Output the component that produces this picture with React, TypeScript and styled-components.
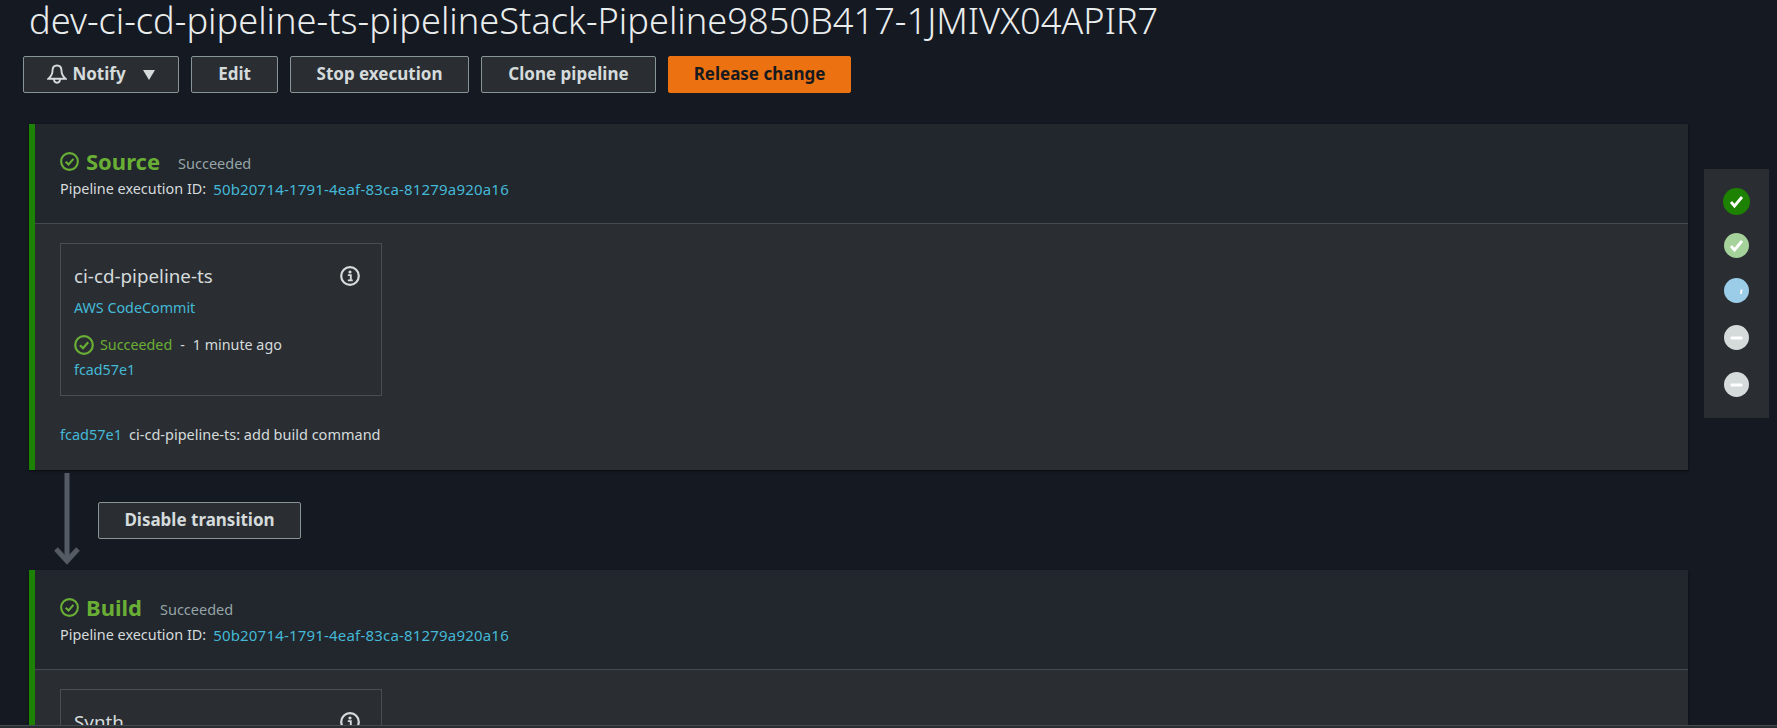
import * as React from 'react';
import styled, { createGlobalStyle } from 'styled-components';

const GlobalStyle = createGlobalStyle`
  html, body {
    margin: 0;
    padding: 0;
    height: 728px;
    overflow: hidden;
    background: #151922;
    font-family: "Noto Sans", "Open Sans", sans-serif;
  }
`;

const Page = styled.div`
  position: relative;
  height: 728px;
  overflow: hidden;
  padding: 0 89px 0 29px;
  box-sizing: border-box;
`;

const Title = styled.h1`
  margin: 0;
  height: 40px;
  font-size: 36.2px;
  line-height: 40px;
  font-weight: 300;
  color: #eaeded;
  white-space: nowrap;
`;

const Toolbar = styled.div`
  display: flex;
  gap: 12px;
  margin: 16px 0 31px -6px;
`;

const Button = styled.button<{ $primary?: boolean; $width: number }>`
  width: ${(p) => p.$width}px;
  height: 37px;
  padding: 0 0 2px;
  box-sizing: border-box;
  display: flex;
  align-items: center;
  justify-content: center;
  gap: 5px;
  border-radius: 2px;
  border: 1px solid ${(p) => (p.$primary ? '#ec7211' : '#879596')};
  background: ${(p) => (p.$primary ? '#ec7211' : '#2a2e33')};
  color: ${(p) => (p.$primary ? '#16191f' : '#d5dbdb')};
  font-family: inherit;
  font-size: 17px;
  font-weight: 700;
`;

const Caret = styled.span`
  width: 0;
  height: 0;
  margin: 2px 0 0 12px;
  border-left: 6.5px solid transparent;
  border-right: 6.5px solid transparent;
  border-top: 10px solid #d5dbdb;
`;

const Stage = styled.section`
  border-left: 6px solid #1d8102;
  background: #2a2e33;
  box-shadow: 0 1px 2px rgba(0, 0, 0, 0.6);
`;

const StageHeader = styled.header`
  height: 100px;
  box-sizing: border-box;
  padding: 22px 25px 0;
  background: #22262d;
  border-bottom: 1px solid #454a50;
`;

const StageTitleRow = styled.div`
  display: flex;
  align-items: center;
  height: 30px;
`;

const StageName = styled.span`
  margin-left: 7px;
  color: #6aaf35;
  font-size: 22px;
  font-weight: 700;
`;

const StageStatus = styled.span`
  margin-left: 18px;
  padding-top: 3px;
  color: #95a5a6;
  font-size: 14.5px;
`;

const ExecutionRow = styled.div`
  margin-top: 3px;
  display: flex;
  gap: 7px;
  color: #d5dbdb;
  font-size: 14.4px;
  line-height: 20px;
`;

const Link = styled.a`
  color: #44b9d6;
`;

const ExecutionLink = styled(Link)`
  font-size: 15px;
  letter-spacing: 0.19px;
`;

const StageBody = styled.div`
  box-sizing: border-box;
  height: 246px;
  padding: 19px 25px 0;
`;

const ActionCard = styled.div`
  width: 322px;
  height: 153px;
  box-sizing: border-box;
  padding: 20px 13px;
  border: 1px solid #4a4e54;
`;

const ActionHead = styled.div`
  display: flex;
  align-items: center;
  justify-content: space-between;
  padding-right: 8px;
  color: #d5dbdb;
  font-size: 18.8px;
  line-height: 24px;
`;

const ActionLine = styled.div<{ $top: number }>`
  display: flex;
  align-items: center;
  gap: 6px;
  margin-top: ${(p) => p.$top}px;
  color: #d5dbdb;
  font-size: 14.3px;
  line-height: 20px;
`;

const Ok = styled.span`
  color: #6aaf35;
`;

const Dash = styled.span`
  margin: 0 2px;
`;

const Revision = styled.div`
  display: flex;
  gap: 7px;
  margin-top: 28px;
  color: #d5dbdb;
  font-size: 14.5px;
  line-height: 20px;
`;

const Transition = styled.div`
  position: relative;
  height: 100px;
  box-sizing: border-box;
  padding: 32px 0 0 69px;
`;

const Arrow = styled.svg`
  position: absolute;
  left: 25px;
  top: 3px;
`;

const BottomEdge = styled.div`
  position: absolute;
  left: 0;
  right: 0;
  bottom: 0;
  height: 2px;
  background: #2a2e33;
  border-top: 1px solid #454a50;
`;

const SideRail = styled.aside`
  position: absolute;
  left: 1704px;
  top: 169px;
  width: 65px;
  height: 249px;
  background: #2a2e33;
  display: flex;
  flex-direction: column;
  align-items: center;
  padding-top: 19px;
  box-sizing: border-box;
`;

const Dot = styled.span<{ $color: string; $size: number; $top: number }>`
  width: ${(p) => p.$size}px;
  height: ${(p) => p.$size}px;
  margin-top: ${(p) => p.$top}px;
  border-radius: 50%;
  background: ${(p) => p.$color};
  display: flex;
  align-items: center;
  justify-content: center;
`;

const CheckCircle = ({ size }: { size: number }) => (
  <svg width={size} height={size} viewBox="0 0 20 20" fill="none" stroke="#6aaf35" strokeWidth="2.2">
    <circle cx="10" cy="10" r="8.8" />
    <path d="M6 10.2l3 3 5.2-6" />
  </svg>
);

const InfoIcon = () => (
  <svg width="20" height="20" viewBox="0 0 20 20" fill="none">
    <circle cx="10" cy="10" r="8.8" stroke="#d5dbdb" strokeWidth="2.2" />
    <circle cx="10" cy="6" r="1.6" fill="#d5dbdb" />
    <path d="M7.8 9.1h3v5M7.8 14.4h5" stroke="#d5dbdb" strokeWidth="1.9" />
  </svg>
);

const BellIcon = () => (
  <svg width="20" height="20" viewBox="0 0 20 20" fill="none" stroke="#d5dbdb" strokeWidth="1.9">
    <path d="M10 1.500c-3 0-4.500 2.300-4.500 5.300 0 3.500-1.200 5.500-4 8h17c-2.800-2.500-4-4.500-4-8 0-3-1.500-5.300-4.500-5.300z" />
    <path d="M7 15c0 2.500 1.200 3.700 3 3.700s3-1.200 3-3.700" />
  </svg>
);

const DotCheck = () => (
  <svg width="15" height="15" viewBox="0 0 15 15" fill="none" stroke="#fff" strokeWidth="2.800">
    <path d="M2 8l3.500 4L13 3" />
  </svg>
);

const DotDash = () => (
  <svg width="13" height="4" viewBox="0 0 13 4">
    <rect width="12" height="3" x="0.500" y="0.500" rx="1" fill="#fff" />
  </svg>
);

const DotTick = () => (
  <svg width="25" height="25" viewBox="0 0 25 25" fill="none" stroke="#fff" strokeWidth="1.800">
    <path d="M17.600 11.500l-.6 4.500" />
  </svg>
);

const StageHeading = ({ name }: { name: string }) => (
  <StageHeader>
    <StageTitleRow>
      <CheckCircle size={19} />
      <StageName>{name}</StageName>
      <StageStatus>Succeeded</StageStatus>
    </StageTitleRow>
    <ExecutionRow>
      Pipeline execution ID:
      <ExecutionLink>50b20714-1791-4eaf-83ca-81279a920a16</ExecutionLink>
    </ExecutionRow>
  </StageHeader>
);

const App = () => (
  <Page>
    <GlobalStyle />
    <Title>dev-ci-cd-pipeline-ts-pipelineStack-Pipeline9850B417-1JMIVX04APIR7</Title>
    <Toolbar>
      <Button $width={156}>
        <BellIcon />
        Notify
        <Caret />
      </Button>
      <Button $width={87}>Edit</Button>
      <Button $width={179}>Stop execution</Button>
      <Button $width={175}>Clone pipeline</Button>
      <Button $width={183} $primary>
        Release change
      </Button>
    </Toolbar>

    <Stage>
      <StageHeading name="Source" />
      <StageBody>
        <ActionCard>
          <ActionHead>
            ci-cd-pipeline-ts
            <InfoIcon />
          </ActionHead>
          <ActionLine $top={10}>
            <Link>AWS CodeCommit</Link>
          </ActionLine>
          <ActionLine $top={17}>
            <CheckCircle size={20} />
            <Ok>Succeeded</Ok>
            <Dash>-</Dash>
            <span>1 minute ago</span>
          </ActionLine>
          <ActionLine $top={5}>
            <Link>fcad57e1</Link>
          </ActionLine>
        </ActionCard>
        <Revision>
          <Link>fcad57e1</Link>
          ci-cd-pipeline-ts: add build command
        </Revision>
      </StageBody>
    </Stage>

    <Transition>
      <Arrow width="26" height="92" viewBox="0 0 26 92" fill="none" stroke="#545b64" strokeWidth="5">
        <path d="M13 0v88" />
        <path d="M2 76l11 12 11-12" />
      </Arrow>
      <Button $width={203}>Disable transition</Button>
    </Transition>

    <Stage>
      <StageHeading name="Build" />
      <StageBody>
        <ActionCard>
          <ActionHead>
            Synth
            <InfoIcon />
          </ActionHead>
        </ActionCard>
      </StageBody>
    </Stage>

    <SideRail>
      <Dot $color="#1d8102" $size={27} $top={0}>
        <DotCheck />
      </Dot>
      <Dot $color="#a5d19a" $size={25} $top={18}>
        <DotCheck />
      </Dot>
      <Dot $color="#9ccde8" $size={25} $top={20}>
        <DotTick />
      </Dot>
      <Dot $color="#d5dbdb" $size={25} $top={22}>
        <DotDash />
      </Dot>
      <Dot $color="#d5dbdb" $size={25} $top={22}>
        <DotDash />
      </Dot>
    </SideRail>
    <BottomEdge />
  </Page>
);

export default App;
